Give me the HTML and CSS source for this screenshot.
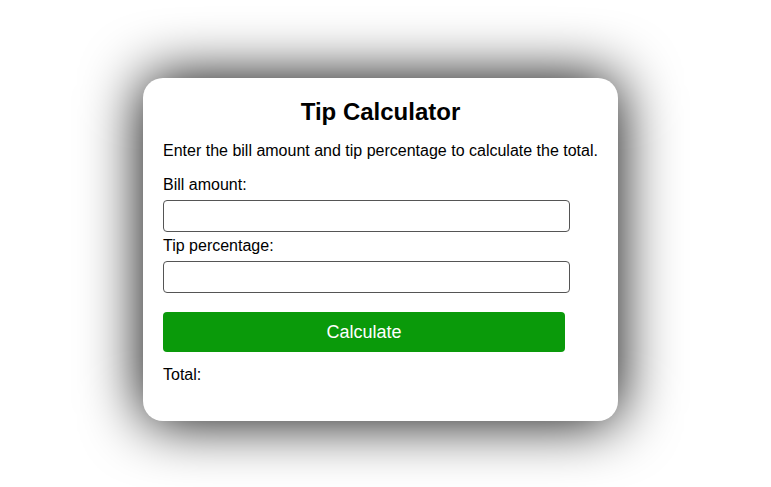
FILE: index.html
```html
<!DOCTYPE html>
<html lang="en">
  <head>
    <meta charset="UTF-8" />
    <meta name="viewport" content="width=device-width, initial-scale=1.0" />
    <title>Tip Calculator</title>
    <link rel="stylesheet" href="styles.css">
  </head>

  <body>
    <div id="container">
      <h1>Tip Calculator</h1>
      <p>Enter the bill amount and tip percentage to calculate the total.</p>
      <label for="bill">Bill amount:</label>
      <input type="text" id="bill" />
      <label for="tip">Tip percentage:</label>
      <input type="text" id="tip" />
      <button id="calculate">Calculate</button>
      <p id="total">Total: <span id="result"></span></p>
    </div>
  </body>
</html>
```

FILE: styles.css
```css
html {
  height: 100%;
}

body {
  box-sizing: border-box;
  min-height: 100%;
  margin: 0;
  padding: 78px 10px 0 0;
  display: flex;
  justify-content: center;
  align-items: flex-start;
  font-family: "Liberation Sans", Arial, sans-serif;
  color: #000;
  background-color: #fff;
}

#container {
  width: 435px;
  padding: 20px 20px 21px;
  background-color: #fff;
  border-radius: 20px;
  box-shadow: 0 0 60px #000;
}

h1 {
  margin: 0 0 16px;
  font-size: 24px;
  text-align: center;
}

p {
  margin: 0 0 16px;
  font-size: 16px;
}

label {
  display: block;
  font-size: 16px;
  margin-bottom: 6px;
}

input {
  display: block;
  box-sizing: border-box;
  width: 407px;
  height: 32px;
  margin: 0 0 5px;
  border: 1px solid #555;
  border-radius: 4px;
  font-size: 16px;
}

button {
  display: block;
  width: 402px;
  height: 40px;
  margin: 19px 0 14px;
  border: none;
  border-radius: 4px;
  background-color: #0a9a0a;
  color: #fff;
  font-family: "Liberation Sans", Arial, sans-serif;
  font-size: 18px;
}

#total {
  margin-bottom: 16px;
}
```
